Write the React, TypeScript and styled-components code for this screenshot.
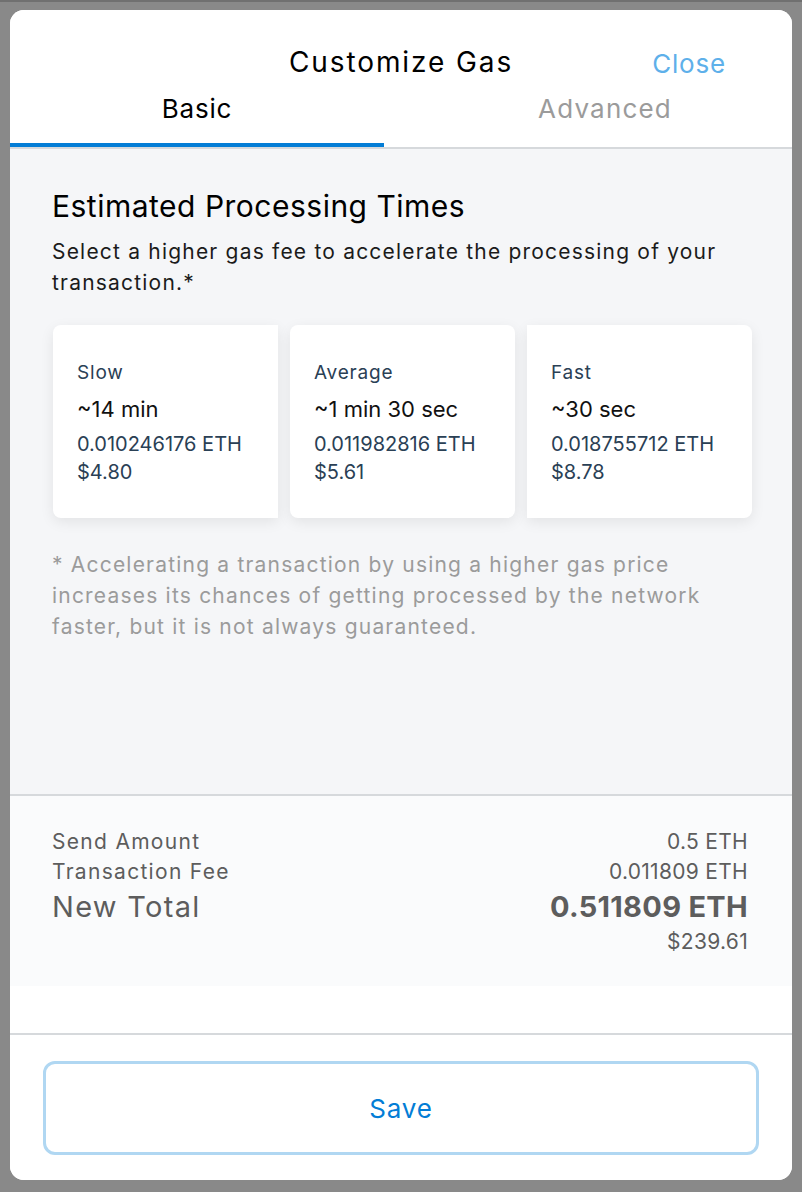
import React, { useState } from "react";
import styled, { createGlobalStyle } from "styled-components";

const GlobalStyle = createGlobalStyle`
  html, body {
    margin: 0;
    padding: 0;
    background: #898989;
  }
  * {
    box-sizing: border-box;
  }
  body {
    font-family: Inter, "Noto Sans", "Liberation Sans", sans-serif;
    -webkit-font-smoothing: antialiased;
  }
`;

type Speed = {
  label: string;
  time: string;
  eth: string;
  usd: string;
};

const speeds: Speed[] = [
  { label: "Slow", time: "~14 min", eth: "0.010246176 ETH", usd: "$4.80" },
  { label: "Average", time: "~1 min 30 sec", eth: "0.011982816 ETH", usd: "$5.61" },
  { label: "Fast", time: "~30 sec", eth: "0.018755712 ETH", usd: "$8.78" },
];

const Backdrop = styled.div`
  width: 802px;
  height: 1192px;
  padding: 8px 10px 10px;
  background: #898989;
  border-top: 2px solid #707070;
`;

const Modal = styled.div`
  width: 782px;
  height: 1170px;
  background: #ffffff;
  border-radius: 14px;
  overflow: hidden;
  display: flex;
  flex-direction: column;
`;

const Header = styled.div`
  background: #ffffff;
  border-bottom: 2px solid #d6d9dc;
`;

const TitleRow = styled.div`
  display: grid;
  grid-template-columns: 1fr auto 1fr;
  align-items: center;
  padding-top: 32px;
  height: 68px;
`;

const Title = styled.div`
  grid-column: 2;
  font-size: 28px;
  line-height: 36px;
  letter-spacing: 1.9px;
  color: #000000;
`;

const CloseButton = styled.button`
  grid-column: 3;
  justify-self: end;
  margin-right: 66px;
  margin-top: 4px;
  background: none;
  border: none;
  padding: 0;
  font-family: inherit;
  font-size: 26px;
  line-height: 36px;
  letter-spacing: 0.8px;
  color: #5eb0ea;
  cursor: pointer;
`;

const TabList = styled.div`
  display: flex;
  justify-content: space-between;
`;

const Tab = styled.button<{ $active?: boolean }>`
  width: 374px;
  background: none;
  border: none;
  border-bottom: 4px solid ${(p) => (p.$active ? "#037dd6" : "transparent")};
  padding: 16px 0 19px;
  font-family: inherit;
  font-size: 26px;
  line-height: 30px;
  letter-spacing: ${(p) => (p.$active ? "0.8px" : "1.2px")};
  color: ${(p) => (p.$active ? "#000000" : "#9b9b9b")};
  cursor: pointer;
`;

const Body = styled.div`
  background: #f5f6f8;
  padding: 39px 38px 0 42px;
  height: 645px;
`;

const Heading = styled.div`
  font-size: 30px;
  line-height: 36px;
  letter-spacing: 0.5px;
  color: #000000;
`;

const Lead = styled.p`
  margin: 12px 0 0;
  font-size: 21px;
  line-height: 31px;
  letter-spacing: 1.2px;
  color: #1b1b1b;
`;

const CardRow = styled.div`
  display: flex;
  gap: 12px;
  margin-top: 27px;
  padding-left: 1px;
`;

const Card = styled.button<{ $pos: "first" | "middle" | "last" }>`
  width: 225px;
  height: 193px;
  background: #ffffff;
  border: none;
  border-radius: ${(p) =>
    p.$pos === "first" ? "8px 0 0 8px" : p.$pos === "last" ? "0 8px 8px 0" : "8px"};
  box-shadow: 0 4px 14px rgba(0, 0, 0, 0.08);
  padding: 35px 0 0 24px;
  text-align: left;
  font-family: inherit;
  display: flex;
  flex-direction: column;
  align-items: flex-start;
  cursor: pointer;
`;

const CardLabel = styled.div`
  font-size: 19px;
  line-height: 26px;
  letter-spacing: 0.8px;
  color: #2a4055;
  margin-bottom: 7px;
`;

const CardTime = styled.div`
  font-size: 22px;
  line-height: 32px;
  font-weight: 400;
  color: #111111;
  margin-bottom: 5px;
`;

const CardValue = styled.div`
  font-size: 20px;
  line-height: 28px;
  color: #2a4055;
`;

const Footnote = styled.p`
  margin: 31px 0 0;
  font-size: 21px;
  line-height: 31px;
  letter-spacing: 1.2px;
  color: #9b9b9b;
`;

const Summary = styled.div`
  border-top: 2px solid #d6d9dc;
  background: #fafbfc;
  height: 192px;
  padding: 31px 44px 0 42px;
  display: flex;
  justify-content: space-between;
`;

const SummaryCol = styled.div<{ $right?: boolean }>`
  display: flex;
  flex-direction: column;
  align-items: ${(p) => (p.$right ? "flex-end" : "flex-start")};
`;

const SummaryText = styled.div<{ $big?: boolean; $bold?: boolean; $spaced?: boolean }>`
  font-size: ${(p) => (p.$big ? "29px" : "21px")};
  line-height: ${(p) => (p.$big ? "40px" : "30px")};
  font-weight: ${(p) => (p.$bold ? 700 : 400)};
  letter-spacing: ${(p) => (p.$spaced ? "1.3px" : "0.3px")};
  color: #5d5d5d;
`;

const Spacer = styled.div`
  flex: 1;
  background: #ffffff;
`;

const Footer = styled.div`
  border-top: 2px solid #d6d9dc;
  padding: 26px 33px 25px;
  background: #ffffff;
`;

const SaveButton = styled.button`
  width: 100%;
  height: 94px;
  border: 3px solid #b0d7f2;
  border-radius: 12px;
  background: #ffffff;
  font-family: inherit;
  font-size: 26px;
  letter-spacing: 0.8px;
  color: #037dd6;
  cursor: pointer;
`;

export default function App() {
  const [tab, setTab] = useState<"basic" | "advanced">("basic");
  const [selected, setSelected] = useState(1);

  return (
    <>
      <GlobalStyle />
      <Backdrop>
        <Modal>
          <Header>
            <TitleRow>
              <Title>Customize Gas</Title>
              <CloseButton>Close</CloseButton>
            </TitleRow>
            <TabList>
              <Tab $active={tab === "basic"} onClick={() => setTab("basic")}>
                Basic
              </Tab>
              <Tab $active={tab === "advanced"} onClick={() => setTab("advanced")}>
                Advanced
              </Tab>
            </TabList>
          </Header>
          <Body>
            <Heading>Estimated Processing Times</Heading>
            <Lead>
              Select a higher gas fee to accelerate the processing of your transaction.*
            </Lead>
            <CardRow>
              {speeds.map((s, i) => (
                <Card
                  key={s.label}
                  $pos={i === 0 ? "first" : i === speeds.length - 1 ? "last" : "middle"}
                  onClick={() => setSelected(i)}
                  aria-pressed={selected === i}
                >
                  <CardLabel>{s.label}</CardLabel>
                  <CardTime>{s.time}</CardTime>
                  <CardValue>{s.eth}</CardValue>
                  <CardValue>{s.usd}</CardValue>
                </Card>
              ))}
            </CardRow>
            <Footnote>
              * Accelerating a transaction by using a higher gas price increases its chances of
              getting processed by the network faster, but it is not always guaranteed.
            </Footnote>
          </Body>
          <Summary>
            <SummaryCol>
              <SummaryText $spaced>Send Amount</SummaryText>
              <SummaryText $spaced>Transaction Fee</SummaryText>
              <SummaryText $big $spaced>New Total</SummaryText>
            </SummaryCol>
            <SummaryCol $right>
              <SummaryText>0.5 ETH</SummaryText>
              <SummaryText>0.011809 ETH</SummaryText>
              <SummaryText $big $bold>0.511809 ETH</SummaryText>
              <SummaryText>$239.61</SummaryText>
            </SummaryCol>
          </Summary>
          <Spacer />
          <Footer>
            <SaveButton>Save</SaveButton>
          </Footer>
        </Modal>
      </Backdrop>
    </>
  );
}
